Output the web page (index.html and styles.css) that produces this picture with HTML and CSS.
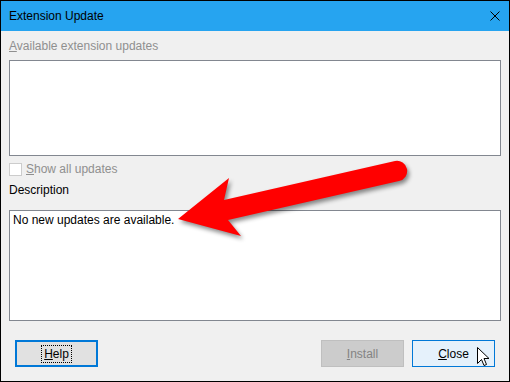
FILE: index.html
```html
<!DOCTYPE html>
<html lang="en">
<head>
    <meta charset="UTF-8">
    <title>Extension Update</title>
    <link rel="stylesheet" href="styles.css">
</head>
<body>
    <div class="dialog">
        <div class="titlebar">
            <span class="title">Extension Update</span>
            <svg class="close-x" width="10" height="10" viewBox="0 0 10 10">
                <path d="M0.5 0.5 L9.5 9.5 M9.5 0.5 L0.5 9.5" stroke="#000" stroke-width="1" fill="none"/>
            </svg>
        </div>

        <div class="content">
            <div class="label disabled"><u>A</u>vailable extension updates</div>
            <div class="listbox updates"></div>

            <div class="check-row">
                <span class="checkbox"></span>
                <span class="disabled"><u>S</u>how all updates</span>
            </div>

            <div class="label">Description</div>
            <div class="listbox description">No new updates are available.</div>

            <div class="buttons">
                <button class="btn btn-focus"><span class="focus-ring"><u>H</u>elp</span></button>
                <span class="spacer"></span>
                <button class="btn btn-disabled"><u>I</u>nstall</button>
                <button class="btn btn-hover"><u>C</u>lose</button>
            </div>
        </div>

        <!-- annotation arrow laid over the dialog -->
        <svg class="red-arrow" width="510" height="382" viewBox="0 0 510 382">
            <path d="M178,219 L229,178 L224,200 L395,161 A10,10 0 0 1 399,181 L228,220 L241,236 Z" fill="#ff0000"/>
        </svg>

        <!-- mouse pointer -->
        <svg class="cursor" width="13" height="21" viewBox="0 0 13 21">
            <path d="M0.5,0.5 L0.5,16.5 L4.5,12.5 L7,18.5 L9.5,17.5 L7,11.5 L12,11.5 Z" fill="#fff" stroke="#000" stroke-width="1" stroke-linejoin="miter"/>
        </svg>
    </div>
</body>
</html>
```

FILE: styles.css
```css
body {
    margin: 0;
    font-family: "Liberation Sans", Arial, sans-serif;
    font-size: 12px;
    color: #000;
}
.dialog {
    position: relative;
    width: 510px;
    height: 382px;
    box-sizing: border-box;
    border: 1px solid #000;
    background: #f0f0f0;
    display: flex;
    flex-direction: column;
}
.titlebar {
    height: 30px;
    background: #26a4f0;
    display: flex;
    align-items: center;
    justify-content: space-between;
    padding: 0 9px 0 8px;
}
.title {
    font-size: 12px;
}
.content {
    padding: 0 8px;
    display: flex;
    flex-direction: column;
}
.label {
    line-height: 18px;
    margin-top: 6px;
    margin-bottom: 5px;
}
.label:nth-of-type(3) {
    margin-top: 5px;
}
.disabled {
    color: #8f8f8f;
}
.listbox {
    background: #fff;
    border: 1px solid #828790;
    box-sizing: border-box;
}
.updates {
    height: 96px;
}
.description {
    height: 111px;
    margin-top: 6px;
    padding: 2px 3px;
    line-height: 14px;
}
.check-row {
    display: flex;
    align-items: center;
    gap: 4px;
    height: 14px;
    margin-top: 6px;
}
.check-row + .label {
    margin-top: 5px;
    margin-bottom: 5px;
}
.checkbox {
    width: 13px;
    height: 13px;
    box-sizing: border-box;
    border: 1px solid #cccccc;
    background: #fff;
}
.buttons {
    display: flex;
    gap: 8px;
    padding: 0 6px;
    margin-top: 19px;
}
.spacer {
    flex: 1;
}
.btn {
    width: 83px;
    height: 27px;
    box-sizing: border-box;
    font-family: inherit;
    font-size: 12px;
    padding: 0;
    display: flex;
    align-items: center;
    justify-content: center;
}
.btn-focus {
    border: 2px solid #0078d7;
    background: #e1e1e1;
}
.focus-ring {
    outline: 1px dotted #000;
    outline-offset: 1px;
    padding: 0 1px;
}
.btn-disabled {
    border: 1px solid #bfbfbf;
    background: #cccccc;
    color: #838383;
}
.btn-hover {
    border: 1px solid #0078d7;
    background: #e5f1fb;
}
.red-arrow {
    position: absolute;
    left: -1px;
    top: -1px;
    filter: drop-shadow(2px 3px 2px rgba(0, 0, 0, 0.45));
}
.cursor {
    position: absolute;
    left: 476px;
    top: 346px;
}
```
